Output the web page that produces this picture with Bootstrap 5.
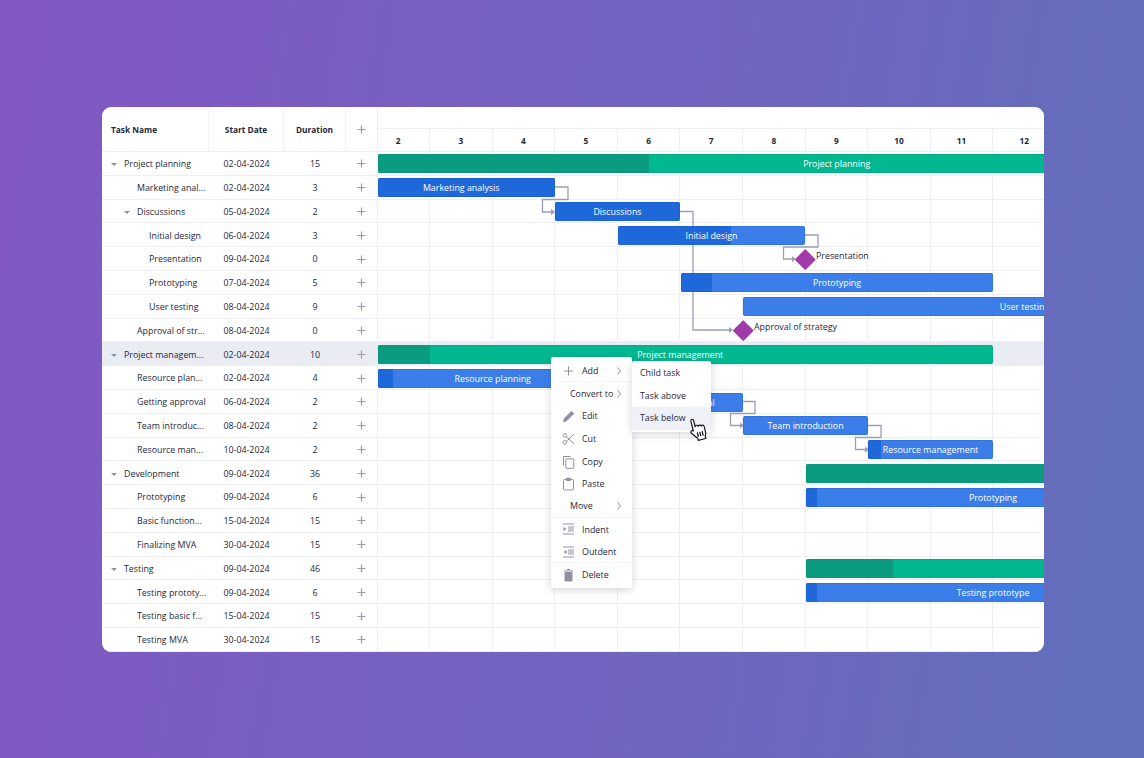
<!DOCTYPE html>
<html lang="en">
<head>
	<meta charset="UTF-8">
	<title>Gantt chart</title>
	<link href="https://cdn.jsdelivr.net/npm/bootstrap@5.3.3/dist/css/bootstrap.min.css" rel="stylesheet">
	<style>
		body {
			background: linear-gradient(100deg, #8257c3 0%, #7264c0 55%, #6170ba 100%);
			height: 758px;
			overflow: hidden;
			font-family: "Open Sans", "Liberation Sans", sans-serif;
			font-size: 8.85px;
			color: #25283a;
		}

		.gantt-board {
			width: 942px;
			height: 545px;
			margin: 107px 0 0 102px;
			border-radius: 9px;
			background: #fff;
			overflow: hidden;
		}

		.grid-side {
			width: 276px;
			flex: none;
			border-right: 1px solid #eceef2;
		}

		.head-row {
			height: 45px;
			padding-top: 2px;
			border-bottom: 1px solid #eceef2;
			font-weight: 700;
			font-size: 8.3px;
		}

		.task-row {
			height: 23.81px;
			padding-top: 3px;
			border-bottom: 1px solid #eeeff3;
		}

		.task-row.picked,
		.time-row.picked {
			background: #eaecf3;
		}

		.col-name {
			width: 107px;
			flex: none;
			white-space: nowrap;
		}

		.head-row .col-name {
			padding-left: 9px;
		}

		.col-start {
			width: 75px;
			flex: none;
			text-align: center;
		}

		.col-dur {
			width: 62px;
			flex: none;
			text-align: center;
		}

		.col-add {
			width: 31px;
			flex: none;
		}

		.head-row > div {
			height: 100%;
			display: flex;
			align-items: center;
			border-right: 1px solid #f1f2f5;
		}

		.head-row > .col-start,
		.head-row > .col-dur,
		.head-row > .col-add {
			justify-content: center;
		}

		.head-row > .col-add {
			border-right: 0;
			padding-bottom: 2px;
		}

		.caret-down {
			width: 0;
			height: 0;
			border-left: 3px solid transparent;
			border-right: 3px solid transparent;
			border-top: 3px solid #8e91a3;
			flex: none;
			margin-right: 7px;
		}

		.ico-plus {
			width: 9px;
			height: 9px;
			stroke: #9a9cab;
			stroke-width: 1.2;
			fill: none;
		}

		.task-row .ico-plus {
			margin-top: -2px;
		}

		.time-side {
			width: 666px;
			flex: none;
			overflow: hidden;
		}

		.time-top {
			height: 22px;
			border-bottom: 1px solid #eceef2;
		}

		.time-days {
			height: 23px;
			margin-left: -10.6px;
			border-bottom: 1px solid #eceef2;
			font-weight: 700;
			font-size: 8.3px;
		}

		.day-cell,
		.time-cell {
			width: 62.6px;
			flex: none;
			border-right: 1px solid #eeeff3;
		}

		.day-cell {
			text-align: center;
			line-height: 23px;
		}

		.time-canvas {
			height: 500px;
		}

		.time-row {
			height: 23.81px;
			margin-left: -10.6px;
			border-bottom: 1px solid #eeeff3;
		}

		.link-layer {
			position: absolute;
			inset: 0;
			width: 666px;
			height: 500px;
		}

		.g-bar {
			position: absolute;
			height: 19px;
			border-radius: 2px;
			overflow: hidden;
			color: #fff;
			font-size: 8.85px;
			line-height: 21px;
			text-align: center;
		}

		.g-bar > i {
			position: absolute;
			left: 0;
			top: 0;
			bottom: 0;
		}

		.g-bar > span {
			position: relative;
		}

		.g-bar::after {
			content: "";
			position: absolute;
			inset: 0;
			border-radius: 2px;
			border: 1px solid rgba(15, 85, 205, .25);
		}

		.bar-project::after {
			border-color: rgba(0, 120, 95, .15);
		}

		.bar-task {
			background: #3b7ee9;
		}

		.bar-task > i {
			background: #1e68d9;
		}

		.bar-project {
			background: #00b88f;
		}

		.bar-project > i {
			background: #0b9c80;
		}

		.g-mile {
			position: absolute;
			width: 14.5px;
			height: 14.5px;
			background: #a33aaa;
			transform: rotate(45deg);
			border-radius: 1px;
		}

		.mile-text {
			position: absolute;
			font-size: 8.85px;
			line-height: 12px;
			white-space: nowrap;
		}

		.ctx-menu,
		.ctx-sub {
			position: absolute;
			display: block;
			min-width: 0;
			padding: 0;
			margin: 0;
			border: 0;
			border-radius: 2px;
			box-shadow: 0 2px 9px rgba(40, 44, 70, .2);
			font-size: 8.85px;
			color: inherit;
		}

		.ctx-menu {
			left: 449px;
			top: 250px;
			width: 81px;
			height: 231px;
			padding-top: 2.7px;
			z-index: 3;
		}

		.ctx-sub {
			left: 530px;
			top: 254px;
			width: 79px;
			height: 71px;
			padding-top: .7px;
			z-index: 4;
		}

		.ctx-menu .dropdown-item,
		.ctx-sub .dropdown-item {
			display: flex;
			align-items: center;
			height: 22.65px;
			padding: 1.5px 0 0;
			font-size: 8.85px;
			color: #25283a;
		}

		.ctx-sub .dropdown-item {
			padding-left: 8px;
		}

		.ctx-sub .dropdown-item.hovered {
			background: #f0f1f6;
		}

		.ctx-menu .ctx-split {
			border-bottom: 1px solid #f5f6f8;
		}

		.ctx-ico {
			width: 31px;
			flex: none;
			display: flex;
			justify-content: center;
			padding-left: 3px;
			margin-top: -1.5px;
		}

		.ctx-ico svg {
			width: 13px;
			height: 14px;
			fill: none;
			stroke: #8f91a1;
			stroke-width: 1;
		}

		.ctx-arrow {
			position: absolute;
			left: 65px;
			width: 6px;
			height: 8px;
			margin-top: -1.5px;
			stroke: #8f91a1;
			fill: none;
			stroke-width: 1;
		}

		.ctx-menu .ctx-noico {
			padding-left: 19px;
		}

		.hand-cursor {
			position: absolute;
			left: 586px;
			top: 309.500px;
			width: 21px;
			height: 24px;
			transform: rotate(-14deg);
			z-index: 5;
		}
	</style>
</head>

<body>
	<div class="gantt-board position-relative d-flex">
		<div class="grid-side">
			<div class="head-row d-flex">
				<div class="col-name">Task Name</div>
				<div class="col-start">Start Date</div>
				<div class="col-dur">Duration</div>
				<div class="col-add"><svg class="ico-plus" viewBox="0 0 9 9"><path d="M4.500 .5v8M.5 4.500h8"/></svg></div>
			</div>
			<div id="taskRows"></div>
		</div>

		<div class="time-side">
			<div class="time-top"></div>
			<div class="time-days d-flex" id="dayCells"></div>
			<div class="time-canvas position-relative" id="canvas">
				<div id="timeRows"></div>
				<svg class="link-layer" viewBox="378 152 666 500" fill="none" stroke="#9c9db2" stroke-width="1.3">
					<path d="M555 187H568V199.500H542.500V212H552"/>
					<path d="M680 211.500H693V330H729"/>
					<path d="M805 235H818V247H783.500V259H792"/>
					<path d="M743 401.500H755V413.500H730.500V425.500H740"/>
					<path d="M868 425.500H881V437.500H855.500V449.500H865"/>
					<path d="M551 209l4 3l-4 3zM729 327l4 3l-4 3zM792 256l4 3l-4 3zM740 422.500l4 3l-4 3zM865 446.500l4 3l-4 3z" fill="#9c9db2" stroke="none"/>
				</svg>
			</div>
		</div>

		<ul class="dropdown-menu ctx-menu list-unstyled">
			<li><a class="dropdown-item ctx-split" href="#"><span class="ctx-ico"><svg viewBox="0 0 13 14"><path d="M6.500 2.500v9M2 7h9"/></svg></span>Add<svg class="ctx-arrow" viewBox="0 0 6 8"><path d="M1.500 .5l3 3.500l-3 3.500"/></svg></a></li>
			<li><a class="dropdown-item ctx-noico" href="#">Convert to<svg class="ctx-arrow" viewBox="0 0 6 8"><path d="M1.500 .5l3 3.500l-3 3.500"/></svg></a></li>
			<li><a class="dropdown-item" href="#"><span class="ctx-ico"><svg viewBox="0 0 13 14"><path d="M1.500 12.500l.7-2.800l7.300-7.300l2.200 2.200l-7.300 7.300z" fill="#8f91a1"/></svg></span>Edit</a></li>
			<li><a class="dropdown-item" href="#"><span class="ctx-ico"><svg viewBox="0 0 13 14"><circle cx="2.800" cy="3.500" r="1.800"/><circle cx="2.800" cy="10.500" r="1.800"/><path d="M4.300 4.600l8 7.400M4.300 9.400l8-7.400"/></svg></span>Cut</a></li>
			<li><a class="dropdown-item" href="#"><span class="ctx-ico"><svg viewBox="0 0 13 14"><path d="M1.500 10.500V1.500H8.500"/><rect x="3.800" y="3.800" width="8" height="9.500" rx=".7"/></svg></span>Copy</a></li>
			<li><a class="dropdown-item" href="#"><span class="ctx-ico"><svg viewBox="0 0 13 14"><rect x="1.500" y="2.500" width="10" height="10.500" rx="1"/><path d="M4.500 1.200h4v2.300h-4z" fill="#8f91a1"/></svg></span>Paste</a></li>
			<li><a class="dropdown-item ctx-noico ctx-split" href="#">Move<svg class="ctx-arrow" viewBox="0 0 6 8"><path d="M1.500 .5l3 3.500l-3 3.500"/></svg></a></li>
			<li><a class="dropdown-item" href="#"><span class="ctx-ico"><svg viewBox="0 0 13 14"><path d="M1 2h11M6 5h6M6 7h6M6 9h6M1 12h11"/><path d="M1.500 5l3 2l-3 2z" fill="#8f91a1" stroke="none"/></svg></span>Indent</a></li>
			<li><a class="dropdown-item ctx-split" href="#"><span class="ctx-ico"><svg viewBox="0 0 13 14"><path d="M1 2h11M6 5h6M6 7h6M6 9h6M1 12h11"/><path d="M4.500 5l-3 2l3 2z" fill="#8f91a1" stroke="none"/></svg></span>Outdent</a></li>
			<li><a class="dropdown-item" href="#"><span class="ctx-ico"><svg viewBox="0 0 13 14"><path d="M3 4.500h7v8.500h-7z" fill="#8f91a1"/><path d="M2 3h9M5 1.500h3"/></svg></span>Delete</a></li>
		</ul>

		<ul class="dropdown-menu ctx-sub list-unstyled">
			<li><a class="dropdown-item" href="#">Child task</a></li>
			<li><a class="dropdown-item" href="#">Task above</a></li>
			<li><a class="dropdown-item hovered" href="#">Task below</a></li>
		</ul>

		<svg class="hand-cursor" viewBox="0 0 21 24">
			<path d="M5 2.500c0-1.800 2.800-1.800 2.800 0v6.500c.3-1.500 3-1.500 3 .3c.3-1.300 3-1.200 3 .5c.5-1.100 2.800-.9 2.800.8v5.400c0 2-.6 3.200-1.300 4.500v2.500H7.500v-2.300c-1.600-1.700-3-3.700-5-6.500c-1-1.600 1-3 2.500-1.500z" fill="#fff" stroke="#16161e" stroke-width="1.200" stroke-linejoin="round"/>
			<path d="M8.500 15v4.500M11 15v4.500M13.500 15v4.500" stroke="#16161e" stroke-width="1.300"/>
		</svg>
	</div>

	<script src="https://cdn.jsdelivr.net/npm/bootstrap@5.3.3/dist/js/bootstrap.bundle.min.js"></script>
	<script>
		// name, depth, has caret, start date, duration
		const tasks = [
			["Project planning", 0, 1, "02-04-2024", 15],
			["Marketing anal...", 1, 0, "02-04-2024", 3],
			["Discussions", 1, 1, "05-04-2024", 2],
			["Initial design", 2, 0, "06-04-2024", 3],
			["Presentation", 2, 0, "09-04-2024", 0],
			["Prototyping", 2, 0, "07-04-2024", 5],
			["User testing", 2, 0, "08-04-2024", 9],
			["Approval of str...", 1, 0, "08-04-2024", 0],
			["Project managem...", 0, 1, "02-04-2024", 10],
			["Resource plan...", 1, 0, "02-04-2024", 4],
			["Getting approval", 1, 0, "06-04-2024", 2],
			["Team introduc...", 1, 0, "08-04-2024", 2],
			["Resource man...", 1, 0, "10-04-2024", 2],
			["Development", 0, 1, "09-04-2024", 36],
			["Prototyping", 1, 0, "09-04-2024", 6],
			["Basic function...", 1, 0, "15-04-2024", 15],
			["Finalizing MVA", 1, 0, "30-04-2024", 15],
			["Testing", 0, 1, "09-04-2024", 46],
			["Testing prototy...", 1, 0, "09-04-2024", 6],
			["Testing basic f...", 1, 0, "15-04-2024", 15],
			["Testing MVA", 1, 0, "30-04-2024", 15]
		];
		const pickedRow = 8;

		// page x start, page x end, row, page x where progress ends, label, kind
		const bars = [
			[378, 1306, 0, 649, "Project planning", "project"],
			[378, 555, 1, 555, "Marketing analysis", "task"],
			[555, 680, 2, 680, "Discussions", "task"],
			[618, 805, 3, 731, "Initial design", "task"],
			[681, 993, 5, 712, "Prototyping", "task"],
			[743, 1306, 6, 743, "User testing", "task"],
			[378, 993, 8, 430, "Project management", "project"],
			[378, 618, 9, 393, "Resource planning", "task"],
			[618, 743, 10, 618, "Getting approval", "task"],
			[743, 868, 11, 743, "Team introduction", "task"],
			[868, 993, 12, 881, "Resource management", "task"],
			[806, 1300, 13, 1300, "", "project"],
			[806, 1180, 14, 817, "Prototyping", "task"],
			[806, 1300, 17, 893, "", "project"],
			[806, 1180, 18, 817, "Testing prototype", "task"]
		];

		const ROW_H = 23.81, LEFT = 378, TOP = 152;
		const plus = '<svg class="ico-plus" viewBox="0 0 9 9"><path d="M4.500 .5v8M.5 4.500h8"/></svg>';

		document.getElementById("taskRows").innerHTML = tasks.map(function (t, i) {
			const pad = t[2] ? 9 + t[1] * 13 : 23 + t[1] * 12;
			const caret = t[2] ? '<span class="caret-down"></span>' : '';
			return '<div class="task-row d-flex align-items-center' + (i === pickedRow ? ' picked' : '') + '">' +
				'<div class="col-name d-flex align-items-center" style="padding-left:' + pad + 'px">' + caret + t[0] + '</div>' +
				'<div class="col-start">' + t[3] + '</div>' +
				'<div class="col-dur">' + t[4] + '</div>' +
				'<div class="col-add d-flex justify-content-center">' + plus + '</div></div>';
		}).join("");

		let dayHtml = "";
		for (let d = 2; d <= 12; d++) dayHtml += '<div class="day-cell">' + d + '</div>';
		document.getElementById("dayCells").innerHTML = dayHtml;

		let cells = "";
		for (let c = 0; c < 11; c++) cells += '<div class="time-cell"></div>';
		document.getElementById("timeRows").innerHTML = tasks.map(function (t, i) {
			return '<div class="time-row d-flex' + (i === pickedRow ? ' picked' : '') + '">' + cells + '</div>';
		}).join("");

		const canvas = document.getElementById("canvas");
		let html = "";
		bars.forEach(function (b) {
			const w = b[1] - b[0];
			// bars in the first column really start in the part of the day that is cut off
			const shift = b[0] === LEFT ? ';padding-right:10.6px' : '';
			html += '<div class="g-bar bar-' + b[5] + '" style="left:' + (b[0] - LEFT) + 'px;top:' + (b[2] * ROW_H + 2.4) + 'px;width:' + w + 'px' + shift + '">' +
				'<i style="width:' + (b[3] - b[0]) + 'px"></i><span>' + b[4] + '</span></div>';
		});
		// milestones: centre x, centre y, label
		[[805, 259, "Presentation"], [743, 330, "Approval of strategy"]].forEach(function (m) {
			html += '<div class="g-mile" style="left:' + (m[0] - LEFT - 7.25) + 'px;top:' + (m[1] - TOP - 7.25) + 'px"></div>' +
				'<div class="mile-text" style="left:' + (m[0] - LEFT + 11) + 'px;top:' + (m[1] - TOP - 9.5) + 'px">' + m[2] + '</div>';
		});
		canvas.insertAdjacentHTML("beforeend", html);
	</script>
</body>

</html>
